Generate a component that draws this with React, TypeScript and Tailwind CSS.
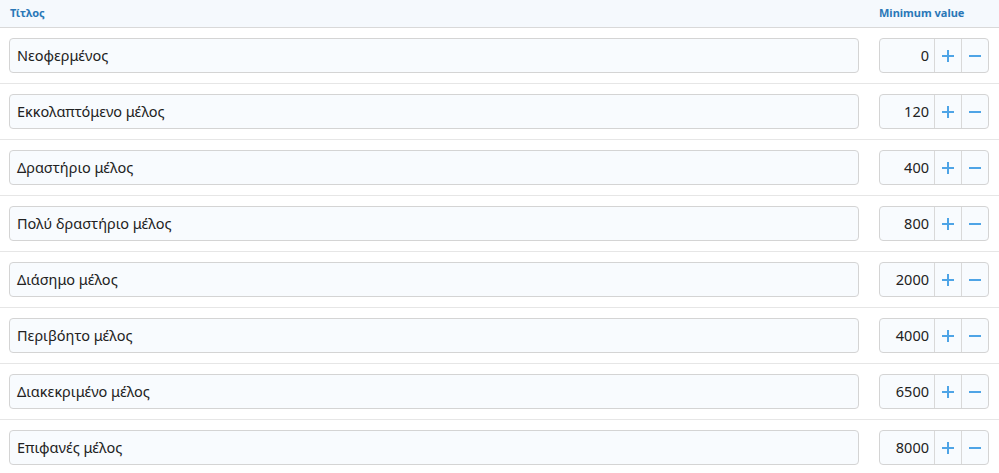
import React from "react";

const rows: [string, string][] = [
  ["Νεοφερμένος", "0"],
  ["Εκκολαπτόμενο μέλος", "120"],
  ["Δραστήριο μέλος", "400"],
  ["Πολύ δραστήριο μέλος", "800"],
  ["Διάσημο μέλος", "2000"],
  ["Περιβόητο μέλος", "4000"],
  ["Διακεκριμένο μέλος", "6500"],
  ["Επιφανές μέλος", "8000"],
];

function Plus() {
  return (
    <svg width="14" height="14" viewBox="0 0 14 14">
      <path d="M7 1v12M1 7h12" stroke="#4ea4e6" strokeWidth="2" />
    </svg>
  );
}
function Minus() {
  return (
    <svg width="14" height="14" viewBox="0 0 14 14">
      <path d="M1 7h12" stroke="#4ea4e6" strokeWidth="2" />
    </svg>
  );
}

export default function App() {
  return (
    <div
      className="w-[999px] bg-white text-[#222]"
      style={{ fontFamily: '"Noto Sans", "Open Sans", sans-serif' }}
    >
      <div className="flex h-[28px] items-center border-b border-[#d9d9d9] bg-[#f5f9fd] pl-[10px] text-[11px] font-bold text-[#2a78b7]">
        <div className="flex-1">Τίτλος</div>
        <div className="w-[120px]">Minimum value</div>
      </div>
      {rows.map(([t, v]) => (
        <div
          key={t}
          className="flex items-center gap-[20px] border-b border-[#e6e6e6] py-[10px] pl-[9px] pr-[10px]"
        >
          <div className="flex h-[35px] w-[850px] items-center rounded-[4px] border border-[#d4d4d4] bg-[#f8fbfe] pl-[7px] text-[14.5px]">
            {t}
          </div>
          <div className="flex h-[35px] w-[110px] rounded-[4px] border border-[#d4d4d4] bg-[#f8fbfe] text-[14.5px]">
            <div className="flex flex-1 items-center justify-end pr-[5px]">{v}</div>
            <div className="flex w-[27px] items-center justify-center border-l border-[#d9d9d9]">
              <Plus />
            </div>
            <div className="flex w-[27px] items-center justify-center border-l border-[#d9d9d9]">
              <Minus />
            </div>
          </div>
        </div>
      ))}
    </div>
  );
}
